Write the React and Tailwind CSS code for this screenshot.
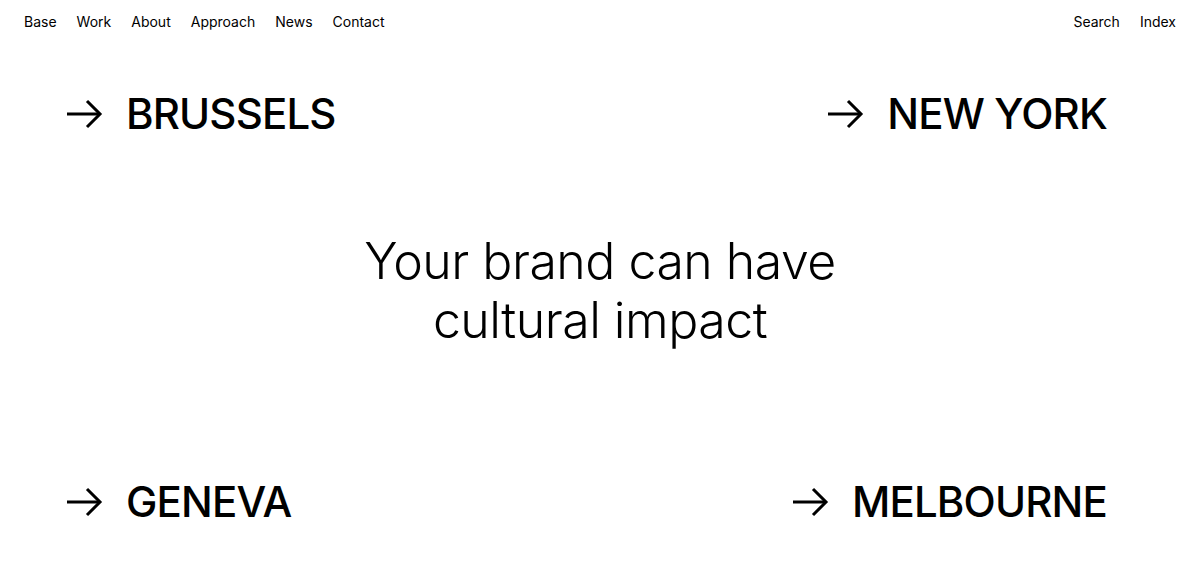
const Arrow = () => (
  <svg width="36" height="30" viewBox="0 0 36 30" fill="none" stroke="currentColor" strokeWidth="3" className="shrink-0">
    <path d="M0 15H33" />
    <path d="M20 2L33 15L20 28" />
  </svg>
);

function City({ name }) {
  return (
    <a href="#" className="flex items-center gap-[23px] text-black">
      <Arrow />
      <span className="text-[42px] font-medium leading-none tracking-[-0.02em]">{name}</span>
    </a>
  );
}

export default function App() {
  const nav = ['Base', 'Work', 'About', 'Approach', 'News', 'Contact'];
  return (
    <div className="h-[574px] w-full bg-white text-black flex flex-col" style={{ fontFamily: 'Inter, "Liberation Sans", sans-serif' }}>
      <header className="flex justify-between px-6 pt-[11px] text-[14px]">
        <nav className="flex gap-[20px]">
          {nav.map((n) => (
            <a key={n} href="#">{n}</a>
          ))}
        </nav>
        <nav className="flex gap-[20px]">
          <a href="#">Search</a>
          <a href="#">Index</a>
        </nav>
      </header>
      <main className="flex-1 flex flex-col justify-between px-[67px] pt-[61px] pb-[51px]">
        <div className="flex justify-between pr-[26px]">
          <City name="BRUSSELS" />
          <City name="NEW YORK" />
        </div>
        <h1 className="mb-[35px] text-center text-[50px] font-light leading-[59px] tracking-[-0.01em]">
          Your brand can have
          <br />
          cultural impact
        </h1>
        <div className="flex justify-between pr-[26px]">
          <City name="GENEVA" />
          <City name="MELBOURNE" />
        </div>
      </main>
    </div>
  );
}
